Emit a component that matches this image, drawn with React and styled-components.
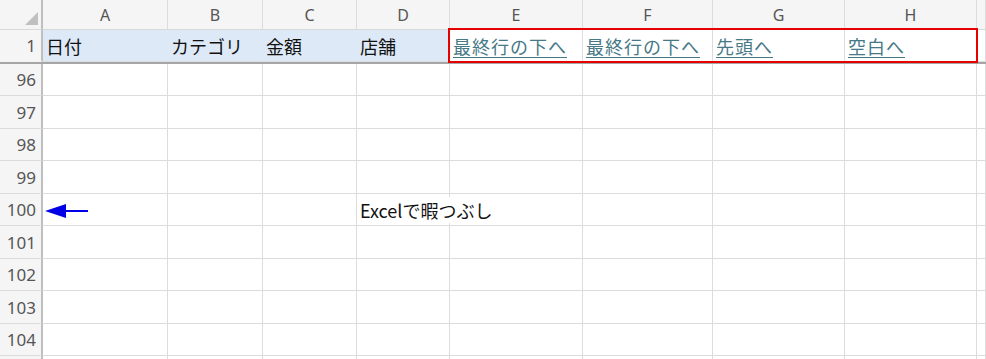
import React from "react";
import styled, { createGlobalStyle } from "styled-components";

const GlobalStyle = createGlobalStyle`
  html, body {
    margin: 0;
    padding: 0;
    background: #ffffff;
  }
  body {
    font-family: "Noto Sans", "Noto Sans CJK JP", sans-serif;
  }
`;

const columns = [
  { key: "A", width: 125 },
  { key: "B", width: 95 },
  { key: "C", width: 94 },
  { key: "D", width: 93 },
  { key: "E", width: 133 },
  { key: "F", width: 130 },
  { key: "G", width: 132 },
  { key: "H", width: 132 },
];

const Sheet = styled.div`
  position: relative;
  width: 986px;
  height: 359px;
  overflow: hidden;
  background: #ffffff;
`;

const Row = styled.div`
  display: flex;
  height: ${(p) => p.$h}px;
`;

const Corner = styled.div`
  position: relative;
  width: 43px;
  flex: none;
  background: #f5f5f5;
  border-right: 2px solid #bfbfbf;
  box-sizing: border-box;
  border-bottom: 1px solid #d9d9d9;
  &::after {
    content: "";
    position: absolute;
    right: 3px;
    bottom: 4px;
    width: 0;
    height: 0;
    border-left: 13px solid transparent;
    border-bottom: 13px solid #c0c0c0;
  }
`;

const ColHead = styled.div`
  width: ${(p) => p.$w}px;
  flex: ${(p) => (p.$rest ? "1" : "none")};
  box-sizing: border-box;
  background: #f5f5f5;
  border-right: 1px solid #dcdcdc;
  border-bottom: 1px solid #d9d9d9;
  display: flex;
  align-items: flex-end;
  justify-content: center;
  padding-bottom: 3px;
  color: #555555;
  font-size: 16px;
  font-family: "Noto Sans", sans-serif;
`;

const RowHead = styled.div`
  width: 43px;
  flex: none;
  box-sizing: border-box;
  background: #f5f5f5;
  border-right: 2px solid #bfbfbf;
  border-bottom: 1px solid ${(p) => (p.$thick ? "transparent" : "#dcdcdc")};
  display: flex;
  align-items: center;
  justify-content: flex-end;
  padding-right: 5px;
  color: #555555;
  font-size: 17px;
  font-family: "Noto Sans", sans-serif;
`;

const Cell = styled.div`
  position: relative;
  width: ${(p) => p.$w}px;
  flex: ${(p) => (p.$rest ? "1" : "none")};
  box-sizing: border-box;
  background: ${(p) => p.$bg || "transparent"};
  border-right: 1px solid ${(p) => (p.$bg ? "transparent" : "#dcdcdc")};
  border-bottom: 1px solid #dcdcdc;
  display: flex;
  align-items: center;
  padding-left: 3px;
  white-space: nowrap;
  font-size: 18px;
  color: #111111;
  font-family: "Noto Sans CJK JP", "Noto Sans", sans-serif;
`;

const Overflow = styled.span`
  position: relative;
  z-index: 1;
  background: #ffffff;
  padding-right: 2px;
`;

const Link = styled.span`
  color: #467886;
  text-decoration: underline;
  text-underline-offset: 3px;
  text-decoration-thickness: 1px;
  letter-spacing: 1px;
`;

const HeaderRule = styled.div`
  height: 2px;
  background: #a6a6a6;
`;

const Frame = styled.div`
  position: absolute;
  left: 448px;
  top: 28px;
  width: 530px;
  height: 35px;
  box-sizing: border-box;
  border: 2px solid #e60000;
  pointer-events: none;
`;

const Arrow = styled.svg`
  position: absolute;
  left: 45px;
  top: 203px;
`;

const row1 = {
  A: "日付",
  B: "カテゴリ",
  C: "金額",
  D: "店舗",
};
const links = { E: "最終行の下へ", F: "最終行の下へ", G: "先頭へ", H: "空白へ" };

const bodyRows = [96, 97, 98, 99, 100, 101, 102, 103, 104, 105];

export default function App() {
  return (
    <Sheet>
      <GlobalStyle />
      <Row $h={30}>
        <Corner />
        {columns.map((c) => (
          <ColHead key={c.key} $w={c.width}>
            {c.key}
          </ColHead>
        ))}
        <ColHead $rest />
      </Row>
      <Row $h={32}>
        <RowHead $thick>1</RowHead>
        {columns.map((c) =>
          links[c.key] ? (
            <Cell key={c.key} $w={c.width}>
              <Link>{links[c.key]}</Link>
            </Cell>
          ) : (
            <Cell key={c.key} $w={c.width} $bg="#dde9f6">
              {row1[c.key]}
            </Cell>
          )
        )}
        <Cell $rest />
      </Row>
      <HeaderRule />
      {bodyRows.map((n, i) => (
        <Row key={n} $h={i % 2 === 0 ? 32 : 33}>
          <RowHead>{n < 105 ? n : ""}</RowHead>
          {columns.map((c) => (
            <Cell key={c.key} $w={c.width}>
              {n === 100 && c.key === "D" ? <Overflow>Excelで暇つぶし</Overflow> : null}
            </Cell>
          ))}
          <Cell $rest />
        </Row>
      ))}
      <Frame />
      <Arrow width="44" height="16" viewBox="0 0 44 16">
        <polygon points="0,8 21,1 21,15" fill="#0000e6" />
        <line x1="20" y1="8" x2="43" y2="8" stroke="#0000e6" strokeWidth="2" />
      </Arrow>
    </Sheet>
  );
}
